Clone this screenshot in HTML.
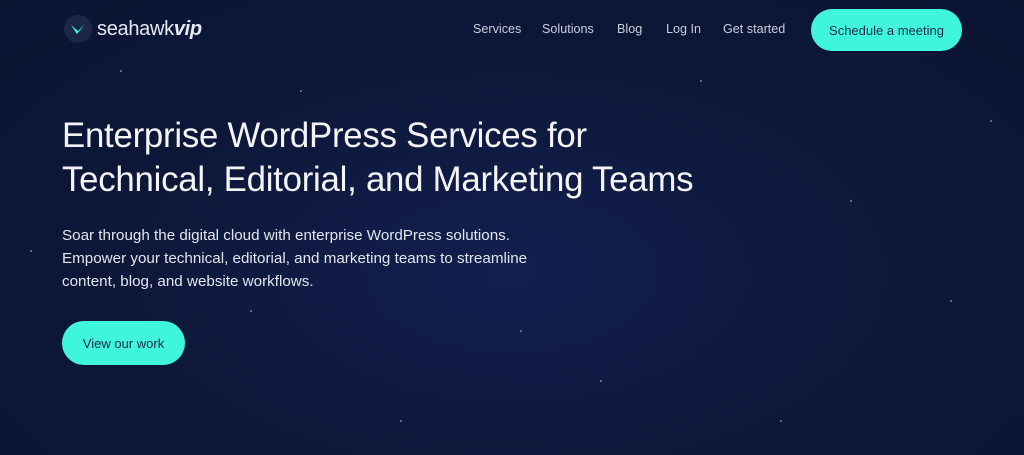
<!DOCTYPE html>
<html><head><meta charset="utf-8"><style>
*{margin:0;padding:0;box-sizing:border-box}
body{width:1024px;height:455px;overflow:hidden;background:radial-gradient(ellipse at 50% 60%,#122050 0%,#0d1738 55%,#0b1433 100%);font-family:"Liberation Sans",sans-serif;position:relative;color:#fff}
.logo{position:absolute;left:64px;top:15px;display:flex;align-items:center}
.logo .c{width:28px;height:28px;border-radius:50%;background:#1a2748;position:relative}
.logo span{font-size:20px;color:#e6e9f0;margin-left:5px;letter-spacing:-0.3px}
.logo b{font-style:italic;font-weight:bold}
.nav{position:absolute;top:22px;font-size:12.6px;color:#c9cedb}
.btn{position:absolute;background:#3ff5dc;color:#1b2a4a;border-radius:22px;display:flex;align-items:center;justify-content:center;font-size:13px}
h1{position:absolute;left:62px;top:114px;font-weight:normal;font-size:34.8px;line-height:44px;color:#f4f4f6;letter-spacing:-0.25px}
p{position:absolute;left:62px;top:224px;font-size:15.2px;line-height:23px;color:#e3e6ee}
.s{position:absolute;width:1.5px;height:1.5px;background:#6a7596;border-radius:50%}
</style></head><body>
<div class="logo"><div class="c"><svg width="28" height="28" viewBox="0 0 28 28"><path d="M7 10 L13 19 L21 9 L14 16 Z" fill="#3ff5dc"/></svg></div><span>seahawk<b>vip</b></span></div>
<div class="nav" style="left:473px">Services</div>
<div class="nav" style="left:542px">Solutions</div>
<div class="nav" style="left:617px">Blog</div>
<div class="nav" style="left:666px">Log In</div>
<div class="nav" style="left:723px">Get started</div>
<div class="btn" style="left:811px;top:9px;width:151px;height:42px">Schedule a meeting</div>
<h1>Enterprise WordPress Services for<br>Technical, Editorial, and Marketing Teams</h1>
<p>Soar through the digital cloud with enterprise WordPress solutions.<br>Empower your technical, editorial, and marketing teams to streamline<br>content, blog, and website workflows.</p>
<div class="btn" style="left:62px;top:321px;width:123px;height:44px">View our work</div>
<div class="s" style="left:120px;top:70px"></div><div class="s" style="left:300px;top:90px"></div><div class="s" style="left:700px;top:80px"></div><div class="s" style="left:850px;top:200px"></div><div class="s" style="left:950px;top:300px"></div><div class="s" style="left:600px;top:380px"></div><div class="s" style="left:400px;top:420px"></div><div class="s" style="left:250px;top:310px"></div><div class="s" style="left:30px;top:250px"></div><div class="s" style="left:780px;top:420px"></div><div class="s" style="left:990px;top:120px"></div><div class="s" style="left:520px;top:330px"></div>
</body></html>
